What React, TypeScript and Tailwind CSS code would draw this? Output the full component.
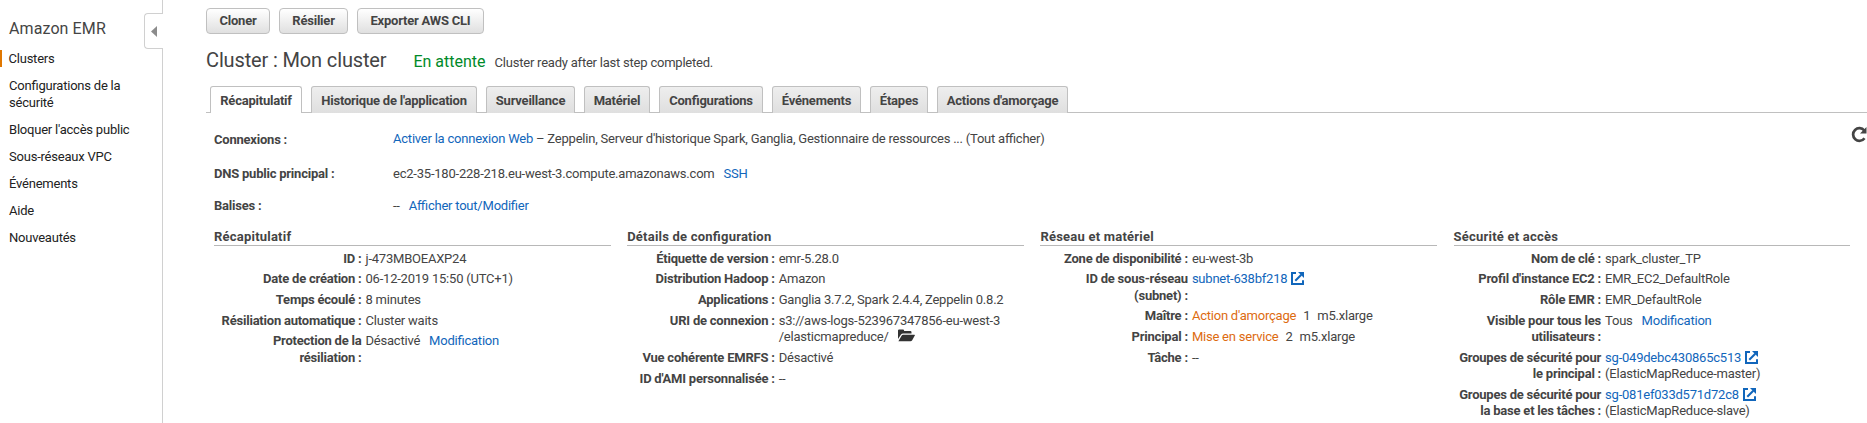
import React from "react";

const link = "text-[#1166bb]";

function External() {
  return (
    <svg className="ml-[4px] inline-block size-[13px] align-[-2px]" viewBox="0 0 13 13" fill="none" stroke="#1166bb" strokeWidth="2">
      <path d="M5 1H1v11h11V8.200" />
      <path d="M4.300 8.700 10.300 2.700" />
      <path d="M7 0H13V6Z" fill="#1166bb" stroke="none" />
    </svg>
  );
}

function Folder() {
  return (
    <svg className="ml-[9px] inline-block h-[13px] w-[17px] align-[-1px]" viewBox="0 0 17 13" fill="#333">
      <path d="M0 10V1.600Q0 .5 1.100.5H5q1.100 0 1.100 1.100v.5h6.300q1.100 0 1.100 1.100v1.400H5q-1.200 0-2 .9Z" />
      <path d="M.4 12.300 3.600 6.700Q4.100 5.700 5.200 5.700H16.300q1 0 .5.9L14.200 11.300Q13.600 12.300 12.500 12.300Z" />
    </svg>
  );
}

const nav = ["Configurations de la sécurité", "Bloquer l'accès public", "Sous-réseaux VPC", "Événements", "Aide", "Nouveautés"];

const tabs = [
  ["Historique de l'application", "w-[166px]"],
  ["Surveillance", "w-[89px]"],
  ["Matériel", "w-[66px]"],
  ["Configurations", "w-[104px]"],
  ["Événements", "w-[89px]"],
  ["Étapes", "w-[58px]"],
  ["Actions d'amorçage", "w-[131px]"],
];

type Row = [label: React.ReactNode, value: React.ReactNode, loose?: boolean];

const summary: Row[] = [
  ["ID :", "j-473MBOEAXP24"],
  ["Date de création :", "06-12-2019 15:50 (UTC+1)"],
  ["Temps écoulé :", "8 minutes"],
  ["Résiliation automatique :", "Cluster waits"],
  [<>Protection de la<br />résiliation :</>, <>Désactivé<a className={`ml-[9px] ${link}`}>Modification</a></>],
];

const config: Row[] = [
  ["Étiquette de version :", "emr-5.28.0"],
  ["Distribution Hadoop :", "Amazon"],
  ["Applications :", "Ganglia 3.7.2, Spark 2.4.4, Zeppelin 0.8.2"],
  ["URI de connexion :", <>s3://aws-logs-523967347856-eu-west-3<br />/elasticmapreduce/<Folder /></>, true],
  ["Vue cohérente EMRFS :", "Désactivé"],
  ["ID d'AMI personnalisée :", "--"],
];

const network: Row[] = [
  ["Zone de disponibilité :", "eu-west-3b"],
  [<>ID de sous-réseau<br />(subnet) :</>, <span className={link}>subnet-638bf218<External /></span>],
  ["Maître :", <><span className="text-[#dd6b10]">Action d'amorçage</span><span className="ml-[7px]">1</span><span className="ml-[7px]">m5.xlarge</span></>],
  ["Principal :", <><span className="text-[#dd6b10]">Mise en service</span><span className="ml-[7px]">2</span><span className="ml-[7px]">m5.xlarge</span></>],
  ["Tâche :", "--"],
];

const security: Row[] = [
  ["Nom de clé :", "spark_cluster_TP"],
  ["Profil d'instance EC2 :", "EMR_EC2_DefaultRole"],
  ["Rôle EMR :", "EMR_DefaultRole"],
  [<>Visible pour tous les<br />utilisateurs :</>, <>Tous<a className={`ml-[9px] ${link}`}>Modification</a></>],
  [<>Groupes de sécurité pour<br />le principal :</>, <><span className={link}>sg-049debc430865c513<External /></span><br />(ElasticMapReduce-master)</>, true],
  [<>Groupes de sécurité pour<br />la base et les tâches :</>, <><span className={link}>sg-081ef033d571d72c8<External /></span><br />(ElasticMapReduce-slave)</>],
];

function Section({ title, rows }: { title: string; rows: Row[] }) {
  return (
    <section className="w-[396.500px] shrink-0">
      <h2 className="h-[17px] border-b border-[#b8b8b8] text-[13px] leading-[16px] font-bold tracking-[0.22px]">{title}</h2>
      <dl className="pt-[4.650px]">
        {rows.map(([label, value, loose], i) => (
          <div key={i} className={`flex leading-[16.3px] ${loose ? "mb-[4.9px]" : "mb-[4.4px]"}`}>
            <dt className="w-[147.500px] shrink-0 text-right font-bold whitespace-nowrap">{label}</dt>
            <dd className="ml-1 whitespace-nowrap">{value}</dd>
          </div>
        ))}
      </dl>
    </section>
  );
}

function Button({ children, className }: { children: React.ReactNode; className: string }) {
  return (
    <button className={`h-[26px] rounded-[4px] border border-[#c0c0c0] bg-linear-to-b from-white to-[#e0e0e0] pb-px text-[13px] font-bold ${className}`}>
      {children}
    </button>
  );
}

export default function App() {
  return (
    <div className="flex h-[423px] w-full overflow-hidden bg-white font-[Roboto,sans-serif] text-[13px] tracking-[-0.22px] text-[#444] [font-feature-settings:'liga']">
      <aside className="relative w-[163px] shrink-0 border-r border-[#d0d0d0] pt-[18px]">
        <div className="absolute top-[13px] -right-px flex h-[36px] w-[19px] items-center rounded-l-[4px] border border-r-0 border-[#d0d0d0] bg-white pl-[6px]">
          <svg className="h-[11px] w-[6px]" viewBox="0 0 6 11" fill="#8c8c8c"><path d="M6 0v11L0 5.500Z" /></svg>
        </div>
        <h1 className="pl-[9px] text-[16px] leading-[21px] tracking-[0.1px]">Amazon EMR</h1>
        <nav className="mt-[11px] text-[#222]">
          <div className="h-[17px] border-l-2 border-[#e07700] pl-[6.500px] leading-[17px]">Clusters</div>
          {nav.map((n) => (
            <div key={n} className="mt-[10px] w-[140px] pl-[9px] leading-[17px]">{n}</div>
          ))}
        </nav>
      </aside>
      <main className="flex w-[1704px] shrink-0 flex-col pl-[43px]">
        <div className="mt-2 flex gap-[9px]">
          <Button className="w-[64px]">Cloner</Button>
          <Button className="w-[69px]">Résilier</Button>
          <Button className="w-[127px]">Exporter AWS CLI</Button>
        </div>
        <div className="mt-[12px] flex h-[28px] items-baseline whitespace-nowrap">
          <h1 className="text-[20px] leading-[28px] tracking-[-0.14px]">Cluster : Mon cluster</h1>
          <span className="ml-[27px] text-[16px] tracking-normal text-[#008a29]">En attente</span>
          <span className="ml-[9px]">Cluster ready after last step completed.</span>
        </div>
        <div className="mt-[12px] flex h-[27px] gap-[9px] border-b border-[#c0c0c0] pl-1 font-bold">
          <div className="h-[27px] w-[92px] rounded-t-[3px] border border-b-0 border-[#c0c0c0] bg-white text-center leading-[27px]">Récapitulatif</div>
          {tabs.map(([t, w]) => (
            <div key={t} className={`h-[27px] rounded-t-[3px] border border-b-0 border-[#c0c0c0] bg-linear-to-b from-[#eee] to-[#dfdfdf] text-center leading-[27px] whitespace-nowrap ${w}`}>{t}</div>
          ))}
        </div>
        <div className="relative pl-2">
          <svg className="absolute top-[12px] left-[1645px] h-[18px] w-[18px]" viewBox="0 0 18 18">
            <path d="M13.500 13.200A6.300 6.300 0 1 1 13.300 5.500" fill="none" stroke="#444" strokeWidth="2.700" />
            <path d="M15.500 2v6.500H9Z" fill="#444" />
          </svg>
          <div className="flex pt-[17px] leading-[17px]">
            <div className="w-[179px] pt-px font-bold">Connexions :</div>
            <div><a className={link}>Activer la connexion Web</a> – Zeppelin, Serveur d'historique Spark, Ganglia, Gestionnaire de ressources ... (Tout afficher)</div>
          </div>
          <div className="mt-[17px] flex leading-[17px]">
            <div className="w-[179px] font-bold">DNS public principal :</div>
            <div>ec2-35-180-228-218.eu-west-3.compute.amazonaws.com<a className={`ml-[9px] ${link}`}>SSH</a></div>
          </div>
          <div className="mt-[15px] flex leading-[17px]">
            <div className="w-[179px] font-bold">Balises :</div>
            <div>--<a className={`ml-[9px] ${link}`}>Afficher tout/Modifier</a></div>
          </div>
          <div className="mt-[15px] flex gap-[16.700px]">
            <Section title="Récapitulatif" rows={summary} />
            <Section title="Détails de configuration" rows={config} />
            <Section title="Réseau et matériel" rows={network} />
            <Section title="Sécurité et accès" rows={security} />
          </div>
        </div>
      </main>
    </div>
  );
}
